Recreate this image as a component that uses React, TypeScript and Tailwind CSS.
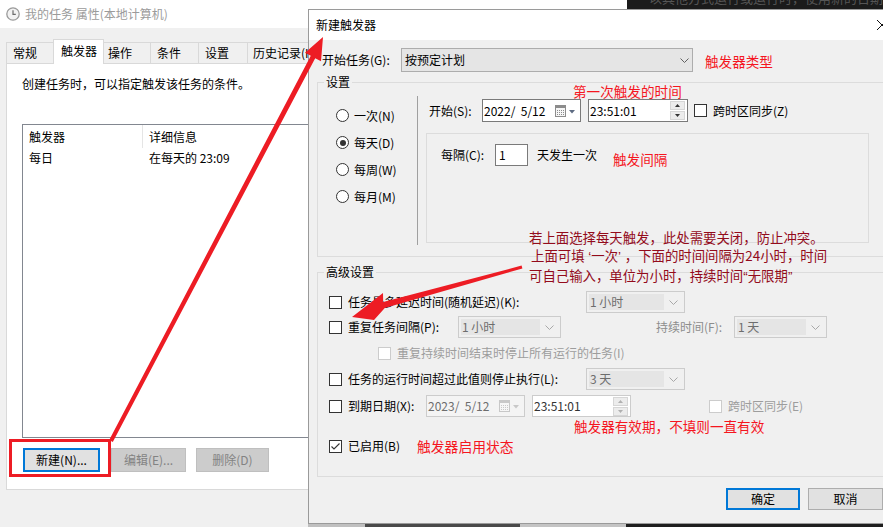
import React from "react";

function Chevron({ color = "#606060" }: { color?: string }) {
  return (
    <svg width="9" height="5" viewBox="0 0 9 5">
      <polyline points="0.5,0.5 4.5,4.5 8.5,0.5" fill="none" stroke={color} strokeWidth="1" />
    </svg>
  );
}

function ClockIcon() {
  return (
    <svg width="14" height="14" viewBox="0 0 14 14">
      <circle cx="7" cy="7" r="6.2" fill="#f2f2f2" stroke="#9a9a9a" strokeWidth="1.3" />
      <path d="M7 3.2V7.3H9.8" stroke="#6a6a6a" strokeWidth="1.2" fill="none" />
    </svg>
  );
}

function CalIcon({ dim = false }: { dim?: boolean }) {
  const c = dim ? "#c8c8c8" : "#8c8c8c";
  const t = dim ? "#c8c8c8" : "#5d6b82";
  const dots: React.ReactNode[] = [];
  [2, 4, 6, 8].forEach((x) =>
    [5, 7, 9].forEach((y) => dots.push(<rect key={`${x}-${y}`} x={x} y={y} width="1" height="1" fill={c} />))
  );
  return (
    <svg width="21" height="12" viewBox="0 0 21 12">
      <rect x="0.5" y="0.5" width="10" height="11" fill="#f6f6f6" stroke={c} />
      <rect x="0.5" y="0.5" width="10" height="2.5" fill={c} />
      {dots}
      <path d="M14 5h6l-3 3.5z" fill={t} />
    </svg>
  );
}

function Spinner({ dim = false }: { dim?: boolean }) {
  const t = dim ? "#b0b0b0" : "#333333";
  return (
    <div className="flex flex-col w-[15px] h-[19px] gap-px">
      <div className="h-[9px] border border-[#d6d6d6] bg-[#ececec] flex items-center justify-center">
        <svg width="5" height="3" viewBox="0 0 5 3">
          <path d="M0 3L2.5 0L5 3z" fill={t} />
        </svg>
      </div>
      <div className="h-[9px] border border-[#d6d6d6] bg-[#ececec] flex items-center justify-center">
        <svg width="5" height="3" viewBox="0 0 5 3">
          <path d="M0 0L2.5 3L5 0z" fill={t} />
        </svg>
      </div>
    </div>
  );
}

function Checkbox({ checked = false, disabled = false }: { checked?: boolean; disabled?: boolean }) {
  return (
    <span
      className={
        disabled
          ? "w-[13px] h-[13px] shrink-0 border border-[#cccccc] bg-white flex items-center justify-center"
          : "w-[13px] h-[13px] shrink-0 border border-[#333333] bg-white flex items-center justify-center"
      }
    >
      {checked && (
        <svg width="11" height="11" viewBox="0 0 11 11">
          <polyline points="1.5,5.5 4,8 9.5,2.5" fill="none" stroke="#333333" strokeWidth="1.1" />
        </svg>
      )}
    </span>
  );
}

function Radio({ checked = false }: { checked?: boolean }) {
  return (
    <span className="w-[13px] h-[13px] shrink-0 rounded-full border border-[#333333] bg-white flex items-center justify-center">
      {checked && <span className="w-[6px] h-[6px] rounded-full bg-[#333333]" />}
    </span>
  );
}

function Combo({ w, text }: { w: string; text: string }) {
  return (
    <div className={`${w} h-[22px] shrink-0 border border-[#cccccc] bg-[#f0f0f0] flex items-center p-[2px]`}>
      <div className="flex-1 h-full bg-[#e5e5e5] flex items-center pl-[1px] text-[#6d6d6d]">{text}</div>
      <div className="w-[18px] flex items-center justify-center">
        <Chevron color="#a8a8a8" />
      </div>
    </div>
  );
}

function Q({ children }: { children: React.ReactNode }) {
  return <span className="font-['Liberation_Sans',sans-serif]">{children}</span>;
}

export default function App() {
  return (
    <div className="relative w-[883px] h-[527px] overflow-hidden bg-[#f0f0f0] text-[12px] leading-[16px] text-black font-['Noto_Sans_CJK_SC','Noto_Sans',sans-serif]">
      {/* Background properties window */}
      <div className="absolute left-0 top-0 w-[627px] h-[527px] flex flex-col bg-[#f0f0f0]">
        <div className="h-[28px] shrink-0 bg-white flex items-center pl-[6px] gap-[5px]">
          <ClockIcon />
          <span className="text-[#9b9b9b]">我的任务 属性(本地计算机)</span>
        </div>
        <div className="mt-[11px] pl-[6px] h-[24px] flex items-end shrink-0">
          <div className="w-[47px] h-[21px] border-l border-t border-[#d9d9d9] bg-[#f0f0f0] flex items-center pl-[6px]">常规</div>
          <div className="relative z-10 w-[51px] h-[25px] -mb-px border-l border-t border-r border-[#d9d9d9] bg-white flex items-center pl-[7px] pb-[3px]">触发器</div>
          <div className="w-[46px] h-[21px] border-t border-[#d9d9d9] bg-[#f0f0f0] flex items-center pl-[4px]">操作</div>
          <div className="w-[48px] h-[21px] border-l border-t border-[#d9d9d9] bg-[#f0f0f0] flex items-center pl-[6px]">条件</div>
          <div className="w-[49px] h-[21px] border-l border-t border-[#d9d9d9] bg-[#f0f0f0] flex items-center pl-[6px]">设置</div>
          <div className="w-[80px] h-[21px] border-l border-t border-r border-[#d9d9d9] bg-[#f0f0f0] flex items-center pl-[5px]">历史记录(H)</div>
        </div>
        <div className="ml-[6px] w-[620px] h-[427px] shrink-0 bg-white border border-[#d9d9d9] flex flex-col pl-[15px]">
          <div className="mt-[12px]">创建任务时，可以指定触发该任务的条件。</div>
          <div className="mt-[32px] w-[600px] h-[314px] border border-[#828790] bg-white flex flex-col">
            <div className="h-[23px] flex">
              <div className="w-[120px] pl-[6px] border-r border-[#e5e5e5] flex items-center">触发器</div>
              <div className="pl-[6px] flex items-center">详细信息</div>
            </div>
            <div className="h-[20px] flex items-center">
              <div className="w-[120px] pl-[6px]">每日</div>
              <div className="pl-[6px]">在每天的 23:09</div>
            </div>
          </div>
          <div className="mt-[10px] flex">
            <div className="ml-px w-[77px] h-[24px] border-2 border-[#0078d7] bg-[#e1e1e1] flex items-center justify-center">新建(N)...</div>
            <div className="ml-[11px] w-[75px] h-[24px] border border-[#bfbfbf] bg-[#cccccc] text-[#838383] flex items-center justify-center">编辑(E)...</div>
            <div className="ml-[10px] w-[73px] h-[24px] border border-[#bfbfbf] bg-[#cccccc] text-[#838383] flex items-center justify-center">删除(D)</div>
          </div>
        </div>
      </div>

      {/* Dark window strip at top right */}
      <div className="absolute left-[627px] top-0 w-[256px] h-[9px] bg-[#1b1b1b] overflow-hidden">
        <div className="-mt-[9px] pl-[22px] text-[13px] leading-[14px] text-[#555555] whitespace-nowrap">
          以其他方式运行或运行时，使用新的日期
        </div>
      </div>

      {/* New trigger dialog */}
      <div className="absolute left-[308px] top-[9px] w-[597px] h-[515px] bg-[#f0f0f0] border border-[#9a9a9a] flex flex-col">
        <div className="h-[30px] shrink-0 bg-white flex items-center justify-between pl-[7px] pr-[17px]">
          <span>新建触发器</span>
          <svg width="10" height="10" viewBox="0 0 10 10">
            <path d="M0 0L10 10M10 0L0 10" stroke="#111111" strokeWidth="1" />
          </svg>
        </div>
        <div className="flex flex-col pl-[8px]">
          <div className="mt-[8px] h-[24px] flex items-center pl-[5px]">
            <div className="w-[79px]">开始任务(G):</div>
            <div className="w-[292px] h-[24px] border border-[#adadad] bg-[#e5e5e5] flex items-center justify-between pl-[3px] pr-[3px]">
              <span>按预定计划</span>
              <Chevron color="#606060" />
            </div>
          </div>

          <fieldset className="mt-[2px] w-[578px] h-[183px] border border-[#dcdcdc]">
            <legend className="ml-[6px] px-[2px] leading-[16px]">设置</legend>
            <div className="flex">
              <div className="w-[99px] shrink-0 flex flex-col pt-[12px] pl-[18px]">
                <div className="h-[27px] flex items-center gap-[5px]">
                  <Radio />
                  <span>一次(N)</span>
                </div>
                <div className="h-[27px] flex items-center gap-[5px]">
                  <Radio checked />
                  <span>每天(D)</span>
                </div>
                <div className="h-[27px] flex items-center gap-[5px]">
                  <Radio />
                  <span>每周(W)</span>
                </div>
                <div className="h-[27px] flex items-center gap-[5px]">
                  <Radio />
                  <span>每月(M)</span>
                </div>
              </div>
              <div className="w-px h-[149px] mt-[6px] shrink-0 bg-[#a0a0a0]" />
              <div className="flex flex-col pl-[8px] pt-[9px]">
                <div className="h-[23px] flex items-center pl-[3px]">
                  <div className="w-[53px]">开始(S):</div>
                  <div className="w-[99px] h-[23px] shrink-0 border border-[#7a7a7a] bg-white flex items-center justify-between pl-[1px] pr-[4px]">
                    <span>2022/&nbsp;&nbsp;5/12</span>
                    <CalIcon />
                  </div>
                  <div className="ml-[7px] w-[100px] h-[23px] shrink-0 border border-[#7a7a7a] bg-white flex items-center justify-between pl-[1px] pr-[2px]">
                    <span>23:51:01</span>
                    <Spinner />
                  </div>
                  <div className="ml-[6px]">
                    <Checkbox />
                  </div>
                  <span className="ml-[6px]">跨时区同步(Z)</span>
                </div>
                <div className="mt-[11px] w-[443px] h-[110px] border border-[#dcdcdc] pl-[14px] pt-[10px]">
                  <div className="h-[22px] flex items-center">
                    <div className="w-[54px]">每隔(C):</div>
                    <div className="w-[33px] h-[22px] border border-[#7a7a7a] bg-white flex items-center pl-[3px]">1</div>
                    <span className="ml-[9px]">天发生一次</span>
                  </div>
                </div>
              </div>
            </div>
          </fieldset>

          <fieldset className="mt-[7px] w-[578px] h-[213px] border border-[#dcdcdc]">
            <legend className="ml-[6px] px-[2px] leading-[16px]">高级设置</legend>
            <div className="flex flex-col pl-[11px]">
              <div className="mt-[11px] h-[22px] flex items-center">
                <Checkbox />
                <span className="ml-[6px] w-[238px]">任务最多延迟时间(随机延迟)(K):</span>
                <Combo w="w-[99px]" text="1 小时" />
              </div>
              <div className="mt-[3px] h-[22px] flex items-center">
                <Checkbox />
                <span className="ml-[6px] w-[110px]">重复任务间隔(P):</span>
                <Combo w="w-[103px]" text="1 小时" />
                <span className="ml-[95px] w-[78px] text-[#8d8d8d]">持续时间(F):</span>
                <Combo w="w-[93px]" text="1 天" />
              </div>
              <div className="mt-[4px] h-[22px] flex items-center pl-[49px]">
                <Checkbox disabled />
                <span className="ml-[6px] text-[#9d9d9d]">重复持续时间结束时停止所有运行的任务(I)</span>
              </div>
              <div className="mt-[4px] h-[22px] flex items-center">
                <Checkbox />
                <span className="ml-[6px] w-[238px]">任务的运行时间超过此值则停止执行(L):</span>
                <Combo w="w-[99px]" text="3 天" />
              </div>
              <div className="mt-[5px] h-[22px] flex items-center">
                <Checkbox />
                <span className="ml-[6px] w-[78px]">到期日期(X):</span>
                <div className="w-[99px] h-[22px] shrink-0 border border-[#cccccc] bg-[#f4f4f4] flex items-center justify-between pl-[1px] pr-[4px] text-[#6d6d6d]">
                  <span>2023/&nbsp;&nbsp;5/12</span>
                  <CalIcon dim />
                </div>
                <div className="ml-[7px] w-[99px] h-[22px] shrink-0 border border-[#cccccc] bg-white flex items-center justify-between pl-[1px] pr-[2px] text-[#333333]">
                  <span>23:51:01</span>
                  <Spinner dim />
                </div>
                <div className="ml-[78px]">
                  <Checkbox disabled />
                </div>
                <span className="ml-[6px] text-[#9d9d9d]">跨时区同步(E)</span>
              </div>
              <div className="mt-[18px] h-[22px] flex items-center">
                <Checkbox checked />
                <span className="ml-[6px]">已启用(B)</span>
              </div>
            </div>
          </fieldset>

          <div className="mt-[11px] flex justify-end pr-[21px] gap-[8px]">
            <div className="w-[74px] h-[22px] border-2 border-[#0078d7] bg-[#e1e1e1] flex items-center justify-center">确定</div>
            <div className="w-[75px] h-[22px] border border-[#adadad] bg-[#e1e1e1] flex items-center justify-center">取消</div>
          </div>
        </div>
      </div>

      {/* bottom strip */}
      <div className="absolute left-[308px] top-[524px] w-[575px] h-[3px] flex">
        <div className="w-[57px] bg-[#c0c0c0]" />
        <div className="w-[155px] bg-[#4a4a4a]" />
        <div className="w-[106px] bg-[#c4c4c4]" />
        <div className="flex-1 bg-[#1e1e1e]" />
      </div>

      {/* annotations */}
      <div className="absolute left-[705px] top-[52px] text-[13.6px] leading-[18px] text-[#f5161f] whitespace-nowrap">触发器类型</div>
      <div className="absolute left-[573px] top-[82px] text-[13.6px] leading-[18px] text-[#f5161f] whitespace-nowrap">第一次触发的时间</div>
      <div className="absolute left-[613px] top-[150px] text-[13.6px] leading-[18px] text-[#f5161f] whitespace-nowrap">触发间隔</div>
      <div className="absolute left-[529px] top-[228px] text-[13.4px] leading-[18px] text-[#930b1b] whitespace-nowrap">
        <div>若上面选择每天触发，此处需要关闭，防止冲突。</div>
        <div className="pl-[2px]">
          上面可填<Q>&nbsp;‘</Q>一次<Q>’&nbsp;</Q>，下面的时间间隔为24小时，时间
        </div>
        <div>
          可自己输入，单位为小时，持续时间<Q>“</Q>无限期<Q>”</Q>
        </div>
      </div>
      <div className="absolute left-[574px] top-[417px] text-[13.6px] leading-[18px] text-[#f5161f] whitespace-nowrap">触发器有效期，不填则一直有效</div>
      <div className="absolute left-[417px] top-[437px] text-[13.8px] leading-[18px] text-[#f5161f] whitespace-nowrap">触发器启用状态</div>

      {/* red highlight box */}
      <div className="absolute left-[9px] top-[439px] w-[102px] h-[38px] border-[3px] border-[#ed1c24]" />

      {/* arrows */}
      <svg className="absolute left-0 top-0 pointer-events-none" width="883" height="527" viewBox="0 0 883 527">
        <polygon
          points="109.2,440.1 310.8,55.8 305,52.8 323,37 321,61.2 315.2,58.2 112.8,441.9"
          fill="#ed1c24"
        />
        <polygon
          points="521.6,265.6 383.2,302.1 383,293 352,317 374,320 384.8,307.9 522.4,268.4"
          fill="#ed1c24"
        />
      </svg>
    </div>
  );
}
